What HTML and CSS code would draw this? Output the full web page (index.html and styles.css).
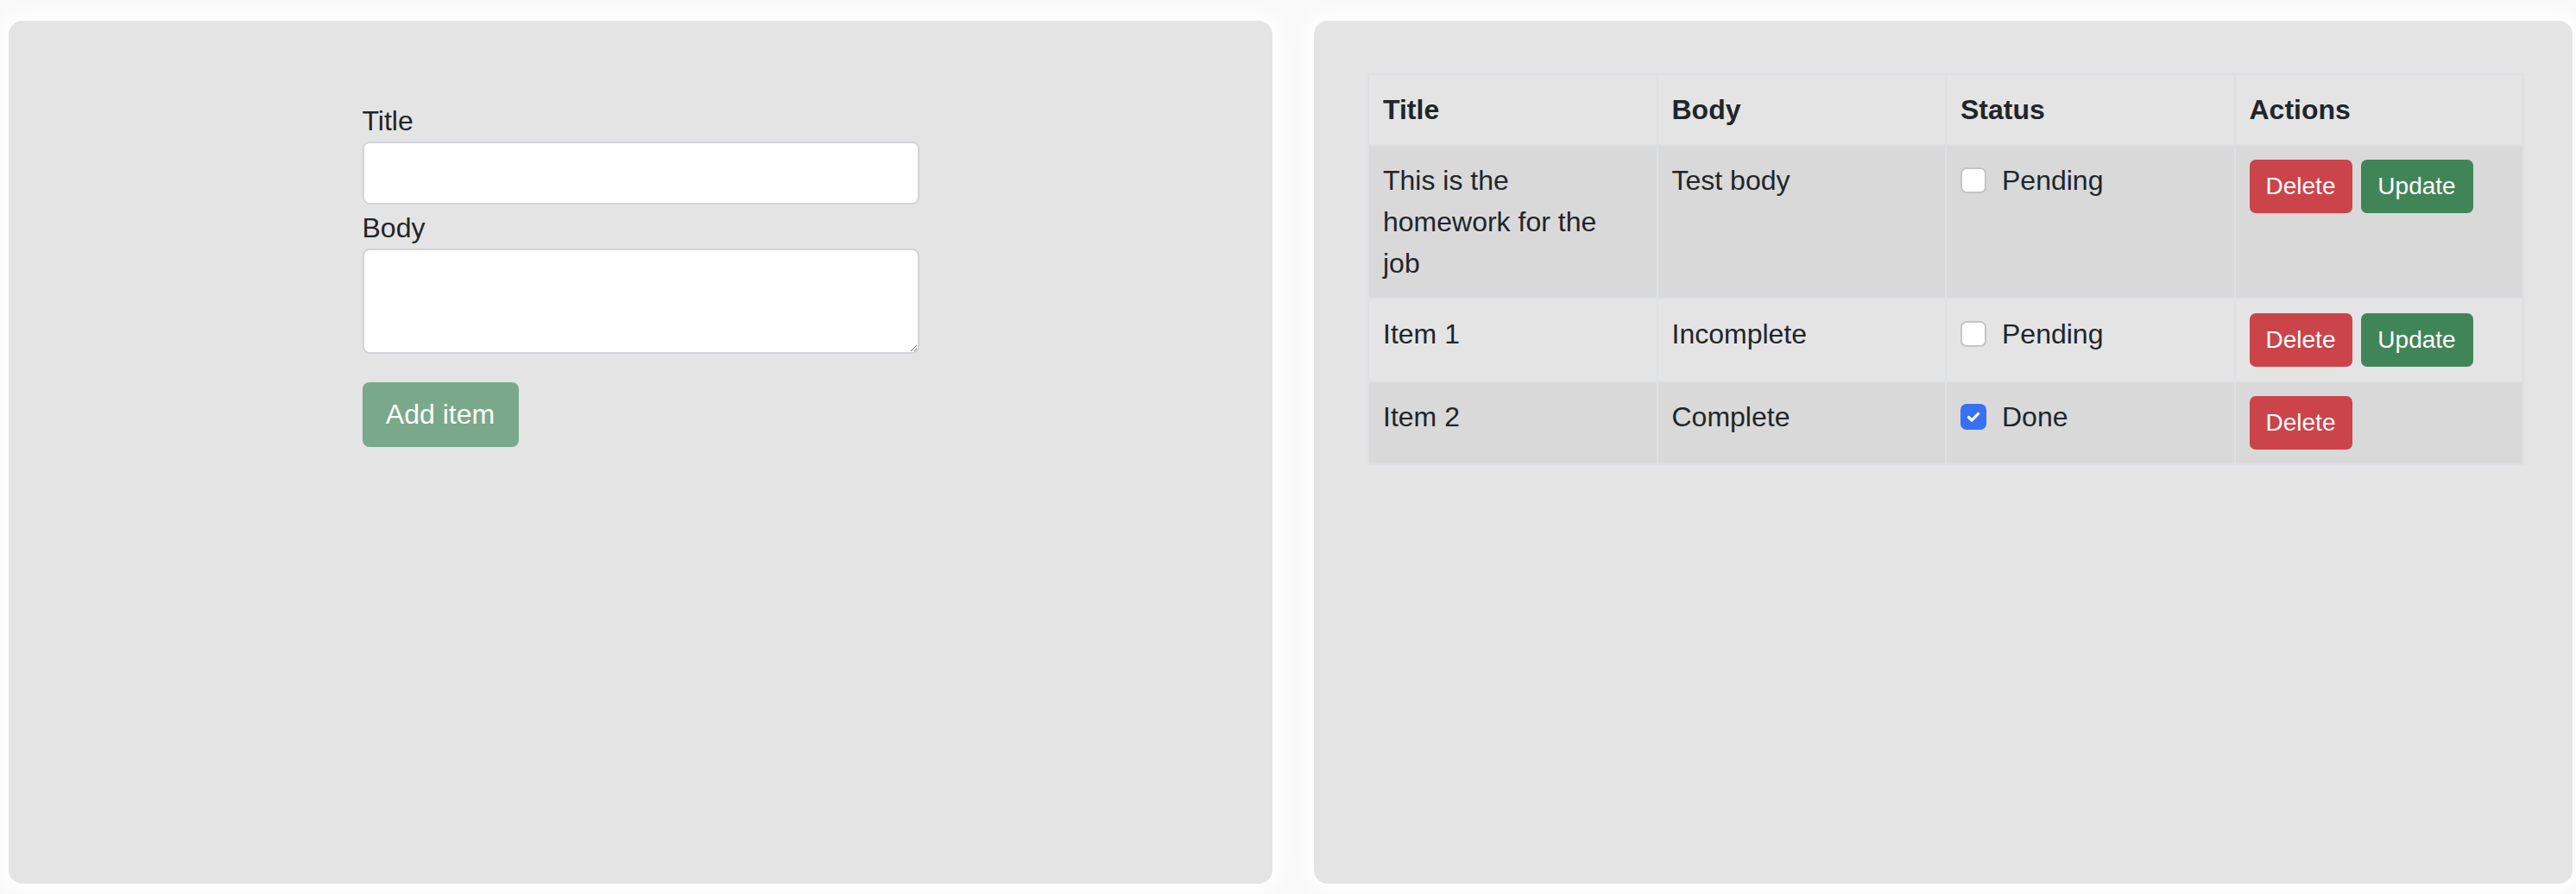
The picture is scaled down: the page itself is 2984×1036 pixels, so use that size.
FILE: index.html
```html
<!DOCTYPE html>
<html lang="en">
<head>
<meta charset="utf-8">
<title>Items</title>
<link rel="stylesheet" href="styles.css">
</head>
<body>
<div class="page">
  <section class="panel panel-form">
    <form class="item-form">
      <label class="field-label" for="title">Title</label>
      <input class="field-input" id="title" type="text">
      <label class="field-label field-label-second" for="body">Body</label>
      <textarea class="field-textarea" id="body"></textarea>
      <button class="btn-add" type="button">Add item</button>
    </form>
  </section>
  <section class="panel panel-table">
    <table class="items">
      <thead>
        <tr><th>Title</th><th>Body</th><th>Status</th><th>Actions</th></tr>
      </thead>
      <tbody>
        <tr class="striped">
          <td class="cell-title">This is the homework for the job</td>
          <td>Test body</td>
          <td><span class="check"><span class="box"></span><span class="check-label">Pending</span></span></td>
          <td><div class="actions"><button class="btn btn-delete" type="button">Delete</button><button class="btn btn-update" type="button">Update</button></div></td>
        </tr>
        <tr>
          <td class="cell-title">Item 1</td>
          <td>Incomplete</td>
          <td><span class="check"><span class="box"></span><span class="check-label">Pending</span></span></td>
          <td><div class="actions"><button class="btn btn-delete" type="button">Delete</button><button class="btn btn-update" type="button">Update</button></div></td>
        </tr>
        <tr class="striped">
          <td class="cell-title">Item 2</td>
          <td>Complete</td>
          <td><span class="check"><span class="box box-checked"><svg viewBox="0 0 20 20" width="20" height="20"><path d="M4.5 10.5 L8.2 14 L15.5 6.5" fill="none" stroke="#fff" stroke-width="3.2" stroke-linecap="round" stroke-linejoin="round"/></svg></span><span class="check-label">Done</span></span></td>
          <td><div class="actions"><button class="btn btn-delete" type="button">Delete</button></div></td>
        </tr>
      </tbody>
    </table>
  </section>
</div>
</body>
</html>
```

FILE: styles.css
```css
html, body {
  margin: 0;
  padding: 0;
}

body {
  background: #f9f9f9;
  font-family: "Liberation Sans", Arial, sans-serif;
  color: #212529;
}

.page {
  display: flex;
  gap: 48px;
  height: 1036px;
  box-sizing: border-box;
  padding: 24px 4px 12px 10px;
}

.panel {
  min-width: 0;
  background: #e4e4e4;
  border-radius: 16px;
  box-shadow: 0 0 22px 8px #ffffff;
  box-sizing: border-box;
}

.panel-form {
  flex: 0 0 1464px;
  padding-top: 92px;
}

.item-form {
  width: 645px;
  margin: 0 auto;
  display: flex;
  flex-direction: column;
  align-items: flex-start;
}

.field-label {
  display: block;
  font-size: 32px;
  line-height: 48px;
  height: 48px;
}

.field-label-second {
  margin-top: 3px;
}

.field-input,
.field-textarea {
  display: block;
  width: 100%;
  box-sizing: border-box;
  background: #ffffff;
  border: 2px solid #d1d4d8;
  border-radius: 8px;
  font-family: inherit;
  font-size: 32px;
  margin: 0;
}

.field-input {
  height: 73px;
}

.field-textarea {
  height: 122px;
  resize: vertical;
}

.btn-add {
  margin-top: 33px;
  width: 181px;
  height: 75px;
  background: #7aa88a;
  color: #ffffff;
  border: none;
  border-radius: 8px;
  font-family: inherit;
  font-size: 32px;
  padding: 0;
}

.panel-table {
  flex: 1 1 0;
  padding: 61px 0 0 62px;
}

.items {
  width: 1340px;
  table-layout: fixed;
  border-collapse: collapse;
  font-size: 32px;
  line-height: 48px;
}

.items th,
.items td {
  border: 2px solid #dde0e4;
  padding: 16px;
  text-align: left;
  vertical-align: top;
}

.items th {
  font-weight: bold;
}

.items tr.striped td {
  background: #d9d9d9;
}

.cell-title {
  padding-right: 22px !important;
}

.check {
  display: flex;
  align-items: flex-start;
  gap: 18px;
}

.box {
  flex: 0 0 auto;
  width: 30px;
  height: 30px;
  margin-top: 9px;
  box-sizing: border-box;
  background: #ffffff;
  border: 2px solid #c4c4c4;
  border-radius: 7px;
  display: flex;
  align-items: center;
  justify-content: center;
}

.box-checked {
  background: #3770f3;
  border-color: #3770f3;
}

.actions {
  display: flex;
  gap: 10px;
}

.btn {
  height: 62px;
  padding: 0 17px;
  border: none;
  border-radius: 7px;
  color: #ffffff;
  font-family: inherit;
  font-size: 28px;
  line-height: 62px;
}

.btn-delete {
  background: #cb444a;
  width: 119px;
}

.btn-update {
  background: #408558;
  width: 130px;
}
```
